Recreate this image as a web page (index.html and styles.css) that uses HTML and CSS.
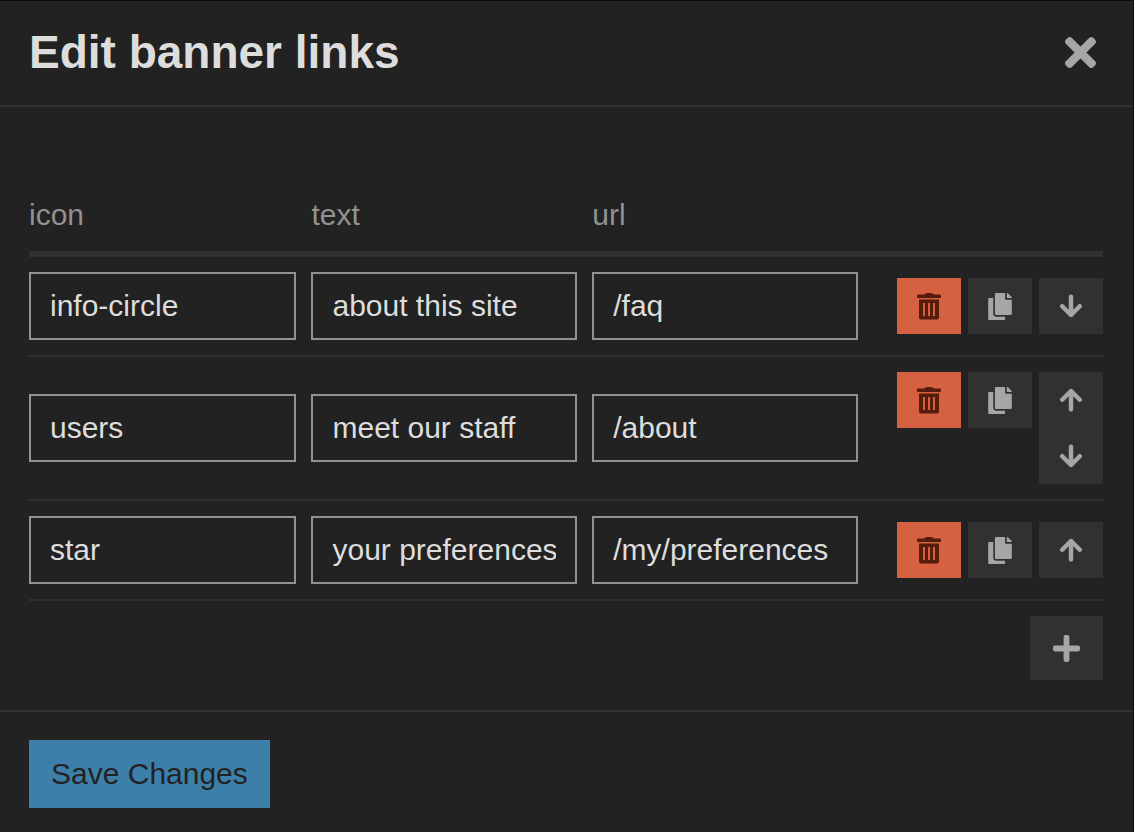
FILE: index.html
```html
<!DOCTYPE html>
<html lang="en">
<head>
<meta charset="utf-8">
<meta name="viewport" content="width=device-width, initial-scale=1">
<title>Edit banner links</title>
<link rel="stylesheet" href="styles.css">
</head>
<body>
<svg class="sprite" aria-hidden="true">
  <symbol id="times" viewBox="0 80 352 352"><path d="M242.72 256l100.07-100.07c12.28-12.28 12.28-32.19 0-44.48l-22.24-22.24c-12.28-12.28-32.19-12.28-44.48 0L176 189.28 75.93 89.21c-12.28-12.28-32.19-12.28-44.48 0L9.21 111.45c-12.28 12.28-12.28 32.19 0 44.48L109.28 256 9.21 356.07c-12.28 12.28-12.28 32.19 0 44.48l22.24 22.24c12.28 12.28 32.2 12.28 44.48 0L176 322.72l100.07 100.07c12.28 12.28 32.2 12.28 44.48 0l22.24-22.24c12.28-12.28 12.28-32.19 0-44.48L242.72 256z"/></symbol>
  <symbol id="trash" viewBox="0 0 24 27"><path fill-rule="evenodd" d="M1 1.6H7.2L8.4.6Q9 0 9.8 0H14.2Q15 0 15.6.6L16.8 1.6H23Q24 1.6 24 2.6V4Q24 5 23 5H1Q0 5 0 4V2.6Q0 1.6 1 1.6ZM2 6.6H22V24.4Q22 26.4 20 26.4H4Q2 26.4 2 24.4ZM6 10V23H8V10ZM11 10V23H13V10ZM16 10V23H18V10Z"/></symbol>
  <symbol id="copy" viewBox="0 0 448 512"><path d="M320 448v40c0 13.255-10.745 24-24 24H24c-13.255 0-24-10.745-24-24V120c0-13.255 10.745-24 24-24h72v296c0 30.879 25.121 56 56 56h168zm0-344V0H152c-13.255 0-24 10.745-24 24v368c0 13.255 10.745 24 24 24h272c13.255 0 24-10.745 24-24V128H344c-13.2 0-24-10.8-24-24zm120.971-31.029L375.029 7.029A24 24 0 0 0 358.059 0H352v96h96v-6.059a24 24 0 0 0-7.029-16.97z"/></symbol>
  <symbol id="down" viewBox="0 0 24 24"><path class="stroke" d="M12 2.6V21M3.2 12.2L12 21l8.800-8.800"/></symbol>
  <symbol id="up" viewBox="0 0 24 24"><path class="stroke" d="M12 21.400V3M3.200 11.800L12 3l8.800 8.800"/></symbol>
  <symbol id="plus" viewBox="0 32 448 448"><path d="M416 208H272V64c0-17.67-14.33-32-32-32h-32c-17.67 0-32 14.33-32 32v144H32c-17.67 0-32 14.33-32 32v32c0 17.67 14.33 32 32 32h144v144c0 17.67 14.33 32 32 32h32c17.67 0 32-14.33 32-32V304h144c17.67 0 32-14.33 32-32v-32c0-17.67-14.33-32-32-32z"/></symbol>
</svg>
<main class="modal">
  <header class="modal-header">
    <h1 class="title">Edit banner links</h1>
    <button class="close" type="button" aria-label="Close"><svg class="icon-close"><use href="#times"/></svg></button>
  </header>
  <form class="modal-form">
    <div class="modal-body">
      <table class="links">
        <colgroup><col class="col-icon"><col><col><col class="col-actions"></colgroup>
        <thead>
          <tr><th scope="col">icon</th><th scope="col">text</th><th scope="col">url</th><td></td></tr>
        </thead>
        <tbody>
          <tr>
            <td><input class="field" type="text" aria-label="icon" value="info-circle"></td>
            <td><input class="field" type="text" aria-label="text" value="about this site"></td>
            <td><input class="field" type="text" aria-label="url" value="/faq"></td>
            <td>
              <div class="actions">
                <button class="btn danger" type="button" aria-label="Delete"><svg class="icon"><use href="#trash"/></svg></button>
                <button class="btn" type="button" aria-label="Duplicate"><svg class="icon"><use href="#copy"/></svg></button>
                <div class="order">
                  <button class="btn" type="button" aria-label="Move down"><svg class="arrow"><use href="#down"/></svg></button>
                </div>
              </div>
            </td>
          </tr>
          <tr>
            <td><input class="field" type="text" aria-label="icon" value="users"></td>
            <td><input class="field" type="text" aria-label="text" value="meet our staff"></td>
            <td><input class="field" type="text" aria-label="url" value="/about"></td>
            <td>
              <div class="actions">
                <button class="btn danger" type="button" aria-label="Delete"><svg class="icon"><use href="#trash"/></svg></button>
                <button class="btn" type="button" aria-label="Duplicate"><svg class="icon"><use href="#copy"/></svg></button>
                <div class="order">
                  <button class="btn" type="button" aria-label="Move up"><svg class="arrow"><use href="#up"/></svg></button>
                  <button class="btn" type="button" aria-label="Move down"><svg class="arrow"><use href="#down"/></svg></button>
                </div>
              </div>
            </td>
          </tr>
          <tr>
            <td><input class="field" type="text" aria-label="icon" value="star"></td>
            <td><input class="field" type="text" aria-label="text" value="your preferences"></td>
            <td><input class="field" type="text" aria-label="url" value="/my/preferences"></td>
            <td>
              <div class="actions">
                <button class="btn danger" type="button" aria-label="Delete"><svg class="icon"><use href="#trash"/></svg></button>
                <button class="btn" type="button" aria-label="Duplicate"><svg class="icon"><use href="#copy"/></svg></button>
                <div class="order">
                  <button class="btn" type="button" aria-label="Move up"><svg class="arrow"><use href="#up"/></svg></button>
                </div>
              </div>
            </td>
          </tr>
        </tbody>
      </table>
      <div class="add-row">
        <button class="btn add" type="button" aria-label="Add link"><svg class="icon-add"><use href="#plus"/></svg></button>
      </div>
    </div>
    <footer class="modal-footer">
      <button class="save" type="submit">Save Changes</button>
    </footer>
  </form>
</main>
</body>
</html>
```

FILE: styles.css
```css
:root {
  --surface: #222;
  --line: #313131;
  --text: #ddd;
  --muted: #919191;
  --icon: #a6a6a6;
  --danger: #d56140;
  --primary: #3c80aa;
}

* {
  box-sizing: border-box;
}

body {
  margin: 0;
  background: var(--surface);
  color: var(--text);
  font: 30px/36px "Liberation Sans", Arial, sans-serif;
}

button,
input {
  margin: 0;
  border: 0;
  border-radius: 0;
  font: inherit;
}

svg {
  display: block;
  fill: currentColor;
}

.sprite {
  position: absolute;
  width: 0;
  height: 0;
}

.stroke {
  fill: none;
  stroke: currentColor;
  stroke-width: 4.4;
  stroke-linecap: round;
  stroke-linejoin: round;
}

.modal {
  min-height: 100vh;
  border-top: 1px solid #0c0c0c;
  border-right: 1px solid #0c0c0c;
}

.modal-header {
  display: flex;
  align-items: center;
  justify-content: space-between;
  padding: 24px 29px 26px;
  border-bottom: 2px solid var(--line);
}

.title {
  margin: 0;
  font-size: 46px;
  line-height: 54px;
}

.close {
  padding: 8px;
  background: none;
  color: var(--icon);
}

.icon-close {
  width: 31px;
  height: 31px;
}

.modal-body {
  padding: 90px 30px 30px 29px;
}

.links {
  width: 100%;
  border-collapse: separate;
  border-spacing: 0;
  table-layout: fixed;
}

.col-icon {
  width: 26.3%;
}

.col-actions {
  width: 230px;
}

.links th,
.links thead td {
  padding: 0 0 18px;
  border-bottom: 6px solid var(--line);
  color: var(--muted);
  font-weight: normal;
  text-align: left;
}

.links tbody td {
  padding: 15px 15px 15px 0;
  border-bottom: 2px solid var(--line);
  vertical-align: middle;
}

.links tbody td:last-child {
  padding-right: 0;
}

.field {
  display: block;
  width: 100%;
  height: 68px;
  padding: 0 19px;
  border: 2px solid var(--muted);
  background: var(--surface);
  color: var(--text);
}

.actions {
  display: flex;
  align-items: flex-start;
  justify-content: flex-end;
  gap: 7px;
}

.order {
  display: flex;
  flex-direction: column;
}

.btn {
  display: flex;
  align-items: center;
  justify-content: center;
  width: 64px;
  height: 56px;
  padding: 0;
  background: var(--line);
  color: var(--icon);
}

.danger {
  background: var(--danger);
  color: #561c0d;
}

.icon {
  width: 24px;
  height: 27px;
}

.arrow {
  width: 24px;
  height: 24px;
}

.add-row {
  display: flex;
  justify-content: flex-end;
  padding-top: 15px;
}

.add {
  width: 73px;
  height: 64px;
}

.icon-add {
  width: 27px;
  height: 27px;
}

.modal-footer {
  padding: 28px 29px 24px;
  border-top: 2px solid var(--line);
}

.save {
  display: block;
  height: 68px;
  padding: 0 22px;
  background: var(--primary);
  color: var(--surface);
}
```
